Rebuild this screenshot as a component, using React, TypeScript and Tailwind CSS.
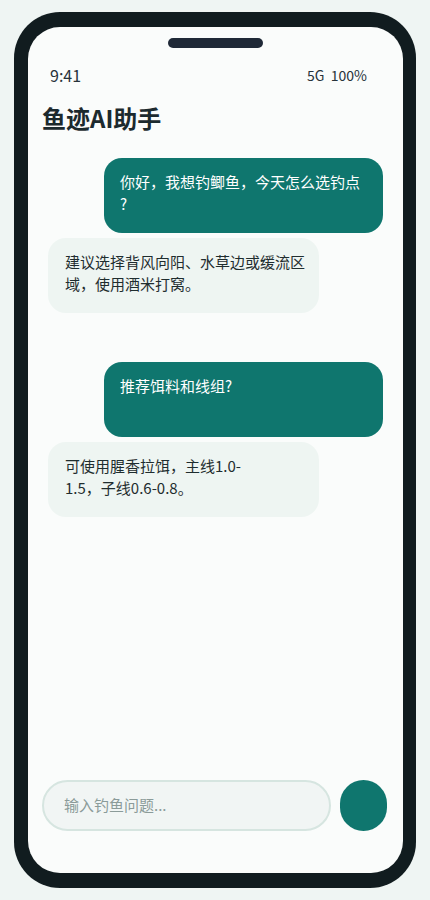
import React from "react"

const font = { fontFamily: '"Noto Sans CJK SC", "Noto Sans", sans-serif' }

type Msg = { from: "user" | "ai"; lines: string[] }

const groups: Msg[][] = [
    [
        { from: "user", lines: ["你好，我想钓鲫鱼，今天怎么选钓点", "?"] },
        { from: "ai", lines: ["建议选择背风向阳、水草边或缓流区", "域，使用酒米打窝。"] },
    ],
    [
        { from: "user", lines: ["推荐饵料和线组?"] },
        { from: "ai", lines: ["可使用腥香拉饵，主线1.0-", "1.5，子线0.6-0.8。"] },
    ],
]

function Bubble({ msg }: { msg: Msg }) {
    const isUser = msg.from === "user"
    return (
        <div className={isUser ? "flex justify-end" : "flex justify-start"}>
            <div
                className={
                    isUser
                        ? "w-[279px] h-[75px] rounded-[18px] bg-[#0f766e] text-white pt-[13px] pl-4 pr-3 text-[15px] leading-[22px]"
                        : "w-[271px] h-[75px] rounded-[18px] bg-[#eef5f2] text-[#1f2d2f] pt-[13px] pl-[17px] pr-2 text-[15px] leading-[22px]"
                }
            >
                {msg.lines.map((l, i) => (
                    <div key={i} className="whitespace-nowrap">
                        {l}
                    </div>
                ))}
            </div>
        </div>
    )
}

export default function App() {
    return (
        <div className="min-h-[900px] w-[430px] bg-[#eff5f3] pt-[12px] pl-[14px]" style={font}>
            <div className="w-[402px] h-[876px] rounded-[46px] bg-[#111c1f] pl-[14px] pr-[13px] py-[15px]">
                <div className="w-full h-full rounded-[32px] bg-[#fafcfb] flex flex-col overflow-hidden">
                    <div className="flex justify-center mt-[11px]">
                        <div className="w-[95px] h-[10px] rounded-full bg-[#1f2937]" />
                    </div>

                    <div className="mt-[17px] h-5 flex items-center justify-between pl-[22px] pr-[36px] text-[#27333a]">
                        <span className="text-[16px]">9:41</span>
                        <span className="text-[14px]">5G&nbsp;&nbsp;100%</span>
                    </div>

                    <h1 className="mt-[17px] px-[14px] text-[24px] leading-8 font-bold text-[#1c2a2e]">鱼迹AI助手</h1>

                    <div className="flex-1 px-5 pt-[24px] flex flex-col gap-[49px]">
                        {groups.map((g, gi) => (
                            <div key={gi} className="flex flex-col gap-[5px]">
                                {g.map((m, mi) => (
                                    <Bubble key={mi} msg={m} />
                                ))}
                            </div>
                        ))}
                    </div>

                    <div className="flex items-center gap-[9px] pl-[14px] pr-[16px] pb-[42px]">
                        <div className="flex-1 h-[51px] rounded-full border-2 border-[#d6e5e0] bg-[#f1f5f4] flex items-center px-5">
                            <span className="text-[15px] text-[#8b9b99]">输入钓鱼问题...</span>
                        </div>
                        <button className="w-[47px] h-[51px] rounded-full bg-[#0f766e]" />
                    </div>
                </div>
            </div>
        </div>
    )
}
